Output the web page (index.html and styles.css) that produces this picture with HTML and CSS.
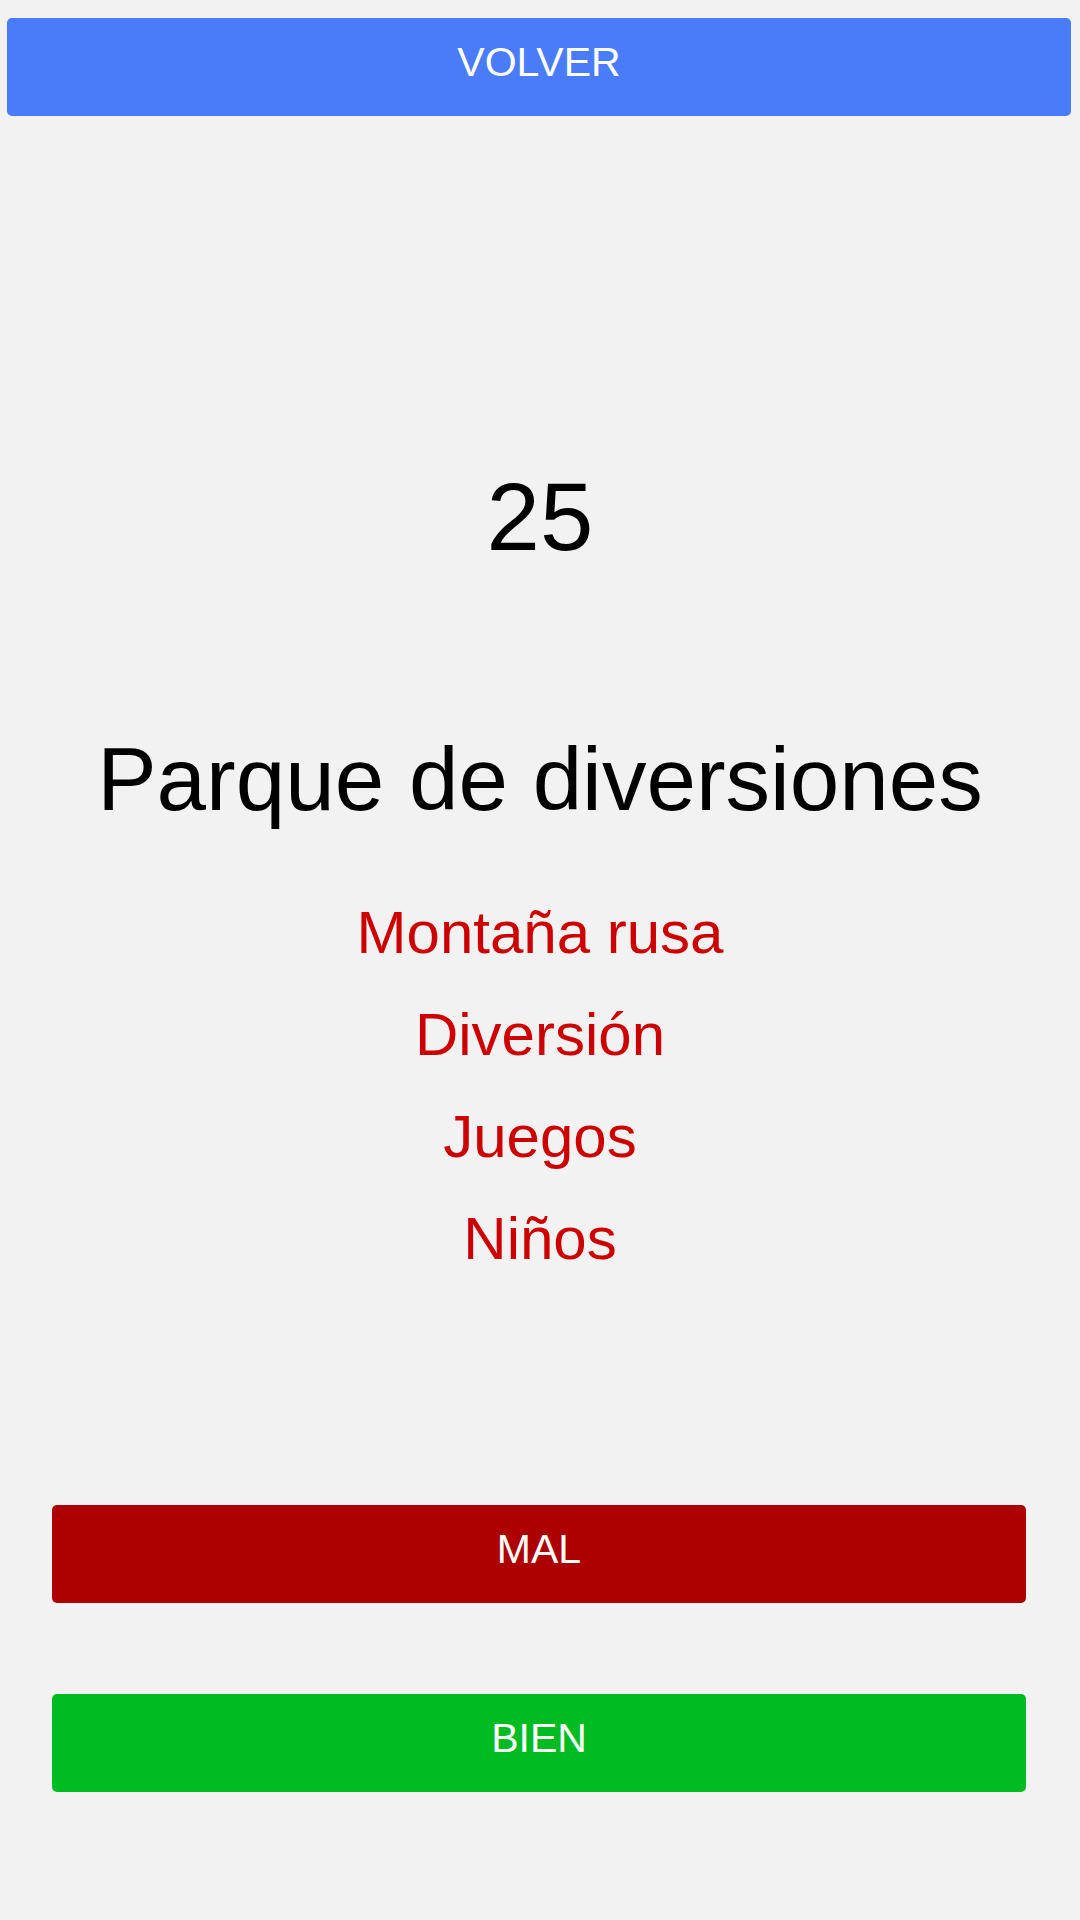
FILE: index.html
```html
<!DOCTYPE html>
<html lang="es">
<head>
<meta charset="utf-8">
<title>Juego</title>
<link rel="stylesheet" href="styles.css">
</head>
<body>
<div class="screen">
  <button class="btn btn-back">VOLVER</button>
  <div class="count">25</div>
  <div class="title">Parque de diversiones</div>
  <ul class="words">
    <li>Montaña rusa</li>
    <li>Diversión</li>
    <li>Juegos</li>
    <li>Niños</li>
  </ul>
  <button class="btn btn-bad">MAL</button>
  <button class="btn btn-good">BIEN</button>
</div>
</body>
</html>
```
FILE: styles.css
```css
html, body {
  margin: 0;
  padding: 0;
  background: #f2f2f2;
}
body {
  font-family: "Liberation Sans", Arial, Helvetica, sans-serif;
  color: #000;
}
.screen {
  display: flex;
  flex-direction: column;
  padding-top: 18px;
  min-height: 1920px;
  box-sizing: border-box;
}
.btn {
  display: block;
  box-sizing: border-box;
  height: 98px;
  padding: 0 0 10px 0;
  border: none;
  border-radius: 5px;
  color: #fff;
  font-family: "Liberation Sans", Arial, Helvetica, sans-serif;
  font-size: 41px;
  line-height: 47px;
  text-align: center;
  align-self: stretch;
  cursor: pointer;
}
.btn-back {
  margin: 0 9px 0 7px;
  background: #4a7cf9;
}
.count {
  margin-top: 346px;
  font-size: 96px;
  line-height: 110px;
  text-align: center;
}
.title {
  margin-top: 155px;
  font-size: 89px;
  line-height: 104px;
  text-align: center;
}
.words {
  list-style: none;
  margin: 51px 0 0 0;
  padding: 0;
  color: #cc0000;
  font-size: 60px;
  line-height: 102px;
  text-align: center;
}
.btn-bad {
  margin: 215px 54px 0 52px;
  background: #ad0000;
}
.btn-good {
  margin: 91px 54px 0 52px;
  background: #00bc22;
}
```
